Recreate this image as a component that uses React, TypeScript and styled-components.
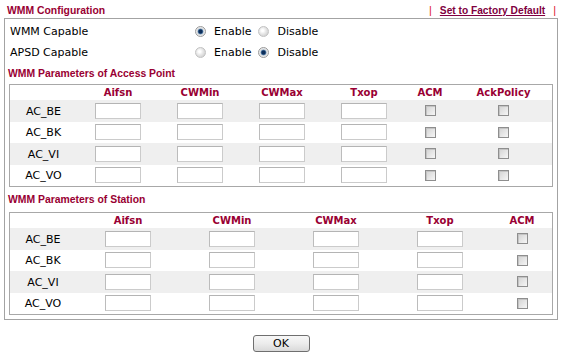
import React from 'react'
import styled, { createGlobalStyle } from 'styled-components'

const GlobalStyle = createGlobalStyle`
  html, body {
    margin: 0;
    padding: 0;
    background: #ffffff;
  }
  body {
    font-family: "DejaVu Sans", Verdana, sans-serif;
    font-size: 11px;
    color: #000;
  }
`

const Page = styled.div`
  width: 562px;
  padding: 0 4px;
  box-sizing: border-box;
`

const TitleBar = styled.div`
  display: flex;
  justify-content: space-between;
  align-items: flex-start;
  height: 18px;
  padding-top: 4px;
  box-sizing: border-box;
`

const Heading = styled.div<{ $top?: number; $bottom?: number; $indent?: number }>`
  font-family: "Liberation Sans", Arial, sans-serif;
  font-weight: bold;
  font-size: 10.4px;
  line-height: 13px;
  color: #990033;
  margin-left: ${p => p.$indent ?? 3}px;
  margin-top: ${p => p.$top ?? 0}px;
  margin-bottom: ${p => p.$bottom ?? 0}px;
`

const Links = styled.div`
  display: flex;
  align-items: center;
  gap: 8px;
  padding-right: 2px;
  font-family: "Liberation Sans", Arial, sans-serif;
  font-weight: bold;
  font-size: 10.2px;
  line-height: 13px;
`

const Pipe = styled.span`
  color: #e0162b;
  font-weight: normal;
  font-size: 11px;
`

const FactoryLink = styled.a`
  color: #800040;
  text-decoration: underline;
  cursor: pointer;
`

const Box = styled.div`
  border: 1px solid #a3a3a3;
  padding: 2px 4px 4px;
`

const CapRow = styled.div`
  display: grid;
  grid-template-columns: 184px auto;
  align-items: center;
  height: 21px;
  padding-left: 1px;
`

const RadioGroup = styled.div`
  display: flex;
  align-items: center;
`

const RadioLabel = styled.label`
  display: flex;
  align-items: center;
  gap: 8px;
  margin-right: 6px;
`

const Radio = styled.span<{ $on?: boolean }>`
  width: 11px;
  height: 11px;
  margin-left: 1px;
  box-sizing: border-box;
  border-radius: 50%;
  border: 1px solid ${p => (p.$on ? '#9a9a9a' : '#c2c2c2')};
  background: ${p =>
    p.$on
      ? 'radial-gradient(circle, #0d2e5a 0 1.6px, #426c98 2.3px, #d4d9de 3.2px, #efefef 4.5px)'
      : 'radial-gradient(circle at 40% 40%, #ffffff 0 1px, #e6e6e6 3.5px, #d6d6d6 5.5px)'};
`

const Table = styled.div`
  border: 1px solid #a8a8a8;
`

const Row = styled.div<{ $cols: string; $shade?: boolean; $h: number }>`
  display: grid;
  grid-template-columns: ${p => p.$cols};
  height: ${p => p.$h}px;
  align-items: center;
  background: ${p => (p.$shade ? '#efefef' : '#ffffff')};
`

const HeadCell = styled.div`
  text-align: center;
  font-weight: bold;
  font-size: 10px;
  color: #990033;
  line-height: 13px;
`

const Cell = styled.div`
  display: flex;
  justify-content: center;
  align-items: center;
`

const LabelCell = styled(Cell)`
  font-size: 11px;
  padding-top: 1px;
`

const Field = styled.input`
  width: 46px;
  height: 16px;
  box-sizing: border-box;
  padding: 0 2px;
  margin: 0;
  border: 1px solid #cbcbcb;
  border-top-color: #b4b4b4;
  border-left-color: #bcbcbc;
  background: #ffffff;
  font-size: 11px;
  outline: none;
`

const Check = styled.span`
  width: 11px;
  height: 11px;
  box-sizing: border-box;
  border: 1px solid #8e8e8e;
  background: linear-gradient(135deg, #d2d2d2 0%, #e6e6e6 55%, #f6f6f6 100%);
  box-shadow: inset 1px 1px 0 #c4c4c4;
`

const Footer = styled.div`
  display: flex;
  justify-content: center;
  padding-top: 15px;
`

const OkButton = styled.button`
  width: 57px;
  height: 17px;
  padding: 0;
  border: 1px solid #6f6f6f;
  border-radius: 3px;
  background: linear-gradient(#f7f7f7, #ececec 50%, #d9d9d9);
  font-family: "DejaVu Sans", Verdana, sans-serif;
  font-size: 11px;
  line-height: 14px;
  color: #000;
`

const ACs = ['AC_BE', 'AC_BK', 'AC_VI', 'AC_VO']

const AP_COLS = '67px 82px 82px 82px 82px 50px 1fr'
const STA_COLS = '66px 104px 104px 104px 104px 1fr'

function ParamTable({ cols, heads, fields, checks }: { cols: string; heads: string[]; fields: number; checks: number }) {
  return (
    <Table>
      <Row $cols={cols} $h={15}>
        <div />
        {heads.map(h => (
          <HeadCell key={h}>{h}</HeadCell>
        ))}
      </Row>
      {ACs.map((ac, i) => (
        <Row key={ac} $cols={cols} $h={21.5} $shade={i % 2 === 0}>
          <LabelCell>{ac}</LabelCell>
          {Array.from({ length: fields }).map((_, k) => (
            <Cell key={'f' + k}>
              <Field type="text" />
            </Cell>
          ))}
          {Array.from({ length: checks }).map((_, k) => (
            <Cell key={'c' + k}>
              <Check />
            </Cell>
          ))}
        </Row>
      ))}
    </Table>
  )
}

function Capability({ label, enabled }: { label: string; enabled: boolean }) {
  return (
    <CapRow>
      <span>{label}</span>
      <RadioGroup>
        <RadioLabel>
          <Radio $on={enabled} />
          Enable
        </RadioLabel>
        <RadioLabel>
          <Radio $on={!enabled} />
          Disable
        </RadioLabel>
      </RadioGroup>
    </CapRow>
  )
}

export default function App() {
  return (
    <Page>
      <GlobalStyle />
      <TitleBar>
        <Heading>WMM Configuration</Heading>
        <Links>
          <Pipe>|</Pipe>
          <FactoryLink>Set to Factory Default</FactoryLink>
          <Pipe>|</Pipe>
        </Links>
      </TitleBar>
      <Box>
        <Capability label="WMM Capable" enabled />
        <Capability label="APSD Capable" enabled={false} />
        <Heading $indent={-1} $top={4} $bottom={4}>WMM Parameters of Access Point</Heading>
        <ParamTable
          cols={AP_COLS}
          heads={['Aifsn', 'CWMin', 'CWMax', 'Txop', 'ACM', 'AckPolicy']}
          fields={4}
          checks={2}
        />
        <Heading $indent={-1} $top={6} $bottom={6}>WMM Parameters of Station</Heading>
        <ParamTable
          cols={STA_COLS}
          heads={['Aifsn', 'CWMin', 'CWMax', 'Txop', 'ACM']}
          fields={4}
          checks={1}
        />
      </Box>
      <Footer>
        <OkButton>OK</OkButton>
      </Footer>
    </Page>
  )
}
